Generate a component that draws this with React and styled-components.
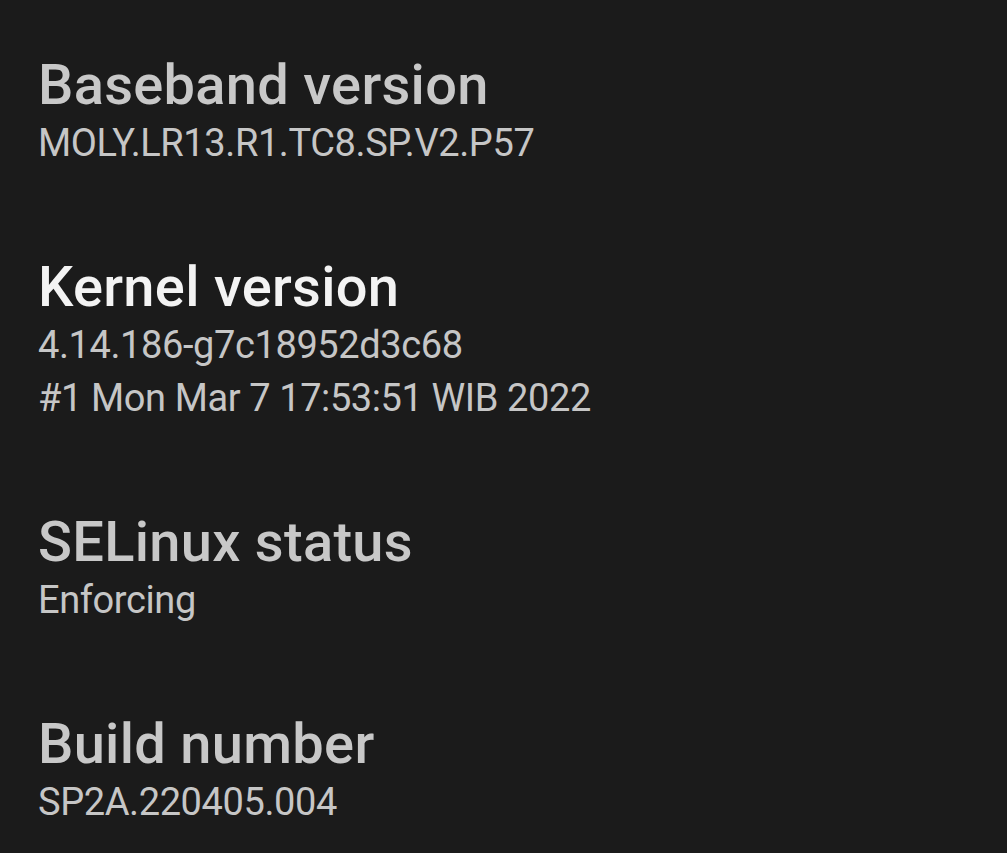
import React from "react";
import styled, { createGlobalStyle } from "styled-components";

const GlobalStyle = createGlobalStyle`
  html, body {
    margin: 0;
    padding: 0;
    background: #1b1b1b;
  }
  body {
    font-family: Roboto, "Open Sans", sans-serif;
  }
`;

const items = [
  { title: "Baseband version", lines: ["MOLY.LR13.R1.TC8.SP.V2.P57"] },
  {
    title: "Kernel version",
    lines: ["4.14.186-g7c18952d3c68", "#1 Mon Mar 7 17:53:51 WIB 2022"],
    active: true
  },
  { title: "SELinux status", lines: ["Enforcing"] },
  { title: "Build number", lines: ["SP2A.220405.004"] }
];

const App = () => {
  return (
    <Screen>
      <GlobalStyle />
      <List>
        {items.map(item => (
          <Item key={item.title}>
            <Title active={item.active}>{item.title}</Title>
            {item.lines.map(line => (
              <Summary key={line}>{line}</Summary>
            ))}
          </Item>
        ))}
      </List>
    </Screen>
  );
};

const Screen = styled.div`
  width: 1007px;
  height: 853px;
  overflow: hidden;
  background: #1b1b1b;
`;

const List = styled.div`
  display: flex;
  flex-direction: column;
  padding-top: 10px;
`;

const Item = styled.div`
  display: flex;
  flex-direction: column;
  padding: 43px 38px 42px;
`;

const Title = styled.div`
  font-size: 56px;
  line-height: 64px;
  font-weight: 500;
  letter-spacing: 0.3px;
  color: ${p => (p.active ? "#f3f3f3" : "#c8c8c8")};
  white-space: nowrap;
`;

const Summary = styled.div`
  font-size: 38px;
  line-height: 53px;
  letter-spacing: -0.4px;
  color: #c6c6c6;
  white-space: nowrap;
`;

export default App;
